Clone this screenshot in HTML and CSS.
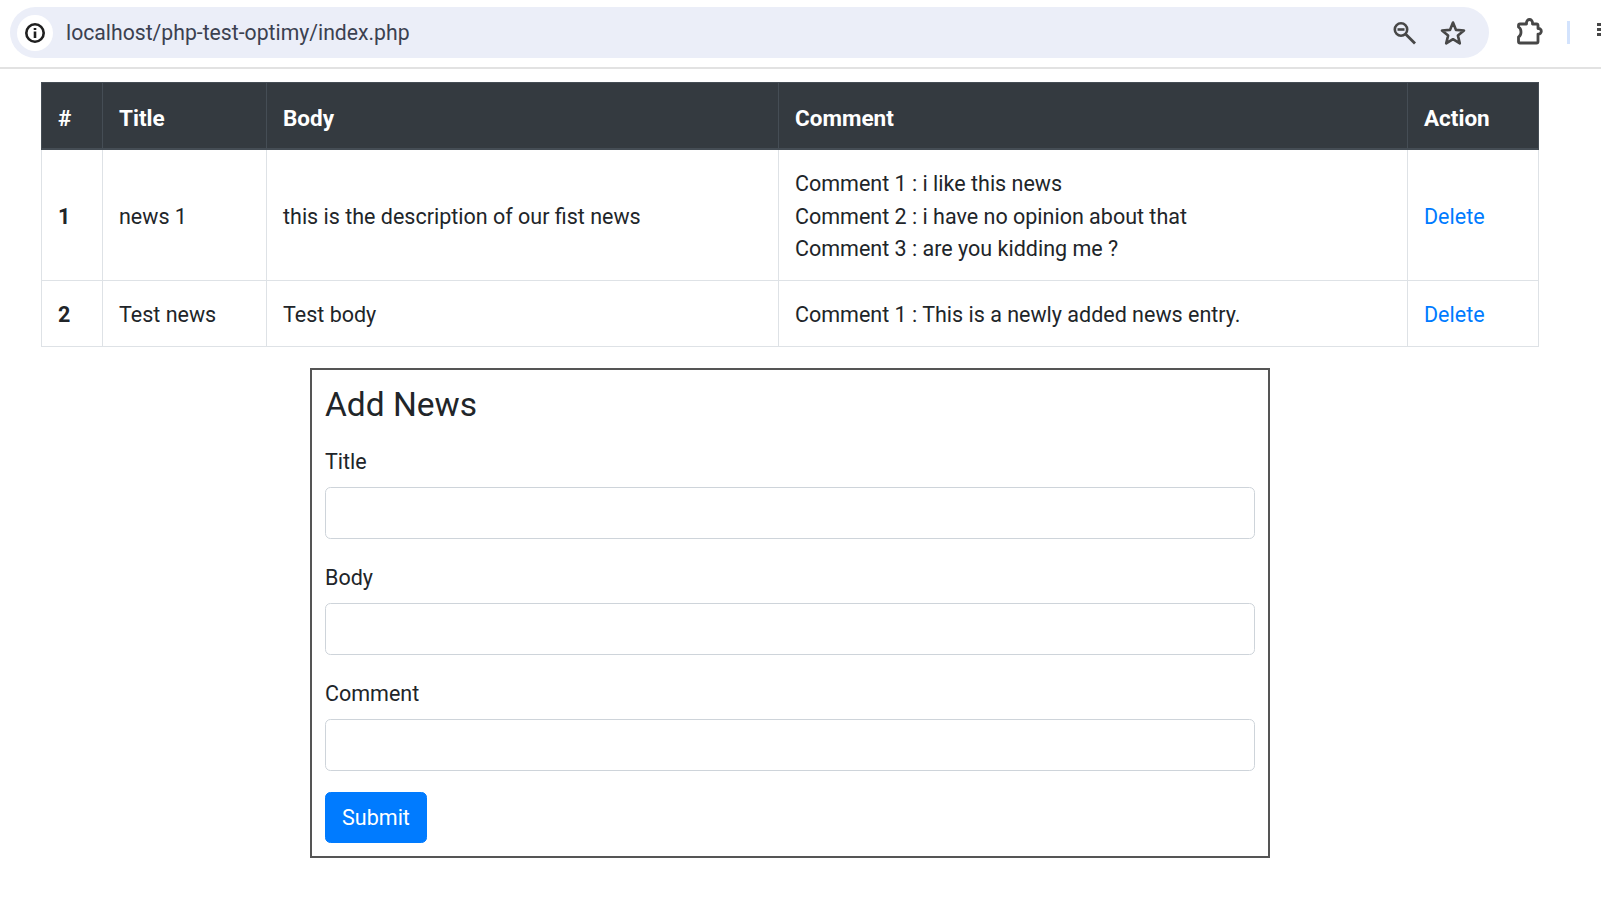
FILE: index.html
```html
<!DOCTYPE html>
<html lang="en">
<head>
<meta charset="utf-8">
<title>News</title>
<link rel="stylesheet" href="styles.css">
</head>
<body>
<header class="chrome">
  <div class="omnibox">
    <span class="site-info">
      <svg width="24" height="24" viewBox="0 0 24 24" fill="none" stroke="#1f1f1f" stroke-width="2.6"><circle cx="12" cy="12" r="8.700"/><path d="M12 10.500v6.500"/><path d="M12 7v2"/></svg>
    </span>
    <span class="url">localhost/php-test-optimy/index.php</span>
    <svg class="zoom-icon" width="28" height="28" viewBox="0 0 28 28" fill="none" stroke="#474747" stroke-width="2.6"><circle cx="10" cy="10.500" r="6.200"/><path d="M6.500 10.500h7"/><path d="M14.500 15l9.500 9.500" stroke-width="2.800"/></svg>
    <svg class="star-icon" width="28" height="28" viewBox="0 0 28 28" fill="none" stroke="#474747" stroke-width="2.6" stroke-linejoin="round"><path d="M14 3.500l3 7.400 8 .6-6.100 5.100 1.900 7.800L14 20.200l-6.800 4.200 1.900-7.800L3 11.500l8-.6z"/></svg>
  </div>
  <svg class="ext-icon" width="28" height="28" viewBox="0 0 28 28" fill="none" stroke="#474747" stroke-width="2.800" stroke-linejoin="round"><path d="M5 7H11.500V5.500a3 3 0 0 1 6 0V7H21.500A1.500 1.500 0 0 1 23 8.500V11.500h.5a2.800 2.800 0 0 1 0 5.600H23v7.400A1.500 1.500 0 0 1 21.500 26H5a1.500 1.500 0 0 1-1.500-1.500V20c2-1 2.500-3 2.500-5s-.5-4-2.500-5V8.500A1.500 1.500 0 0 1 5 7z"/></svg>
  <span class="divider"></span>
  <span class="menu-dots"><i></i><i></i><i></i></span>
</header>
<main>
  <table class="news">
    <colgroup>
      <col class="c-num"><col class="c-title"><col class="c-body"><col class="c-comment"><col class="c-action">
    </colgroup>
    <thead>
      <tr><th>#</th><th>Title</th><th>Body</th><th>Comment</th><th>Action</th></tr>
    </thead>
    <tbody>
      <tr>
        <th>1</th>
        <td>news 1</td>
        <td>this is the description of our fist news</td>
        <td>Comment 1 : i like this news<br>Comment 2 : i have no opinion about that<br>Comment 3 : are you kidding me ?</td>
        <td><a href="#">Delete</a></td>
      </tr>
      <tr class="single">
        <th>2</th>
        <td>Test news</td>
        <td>Test body</td>
        <td>Comment 1 : This is a newly added news entry.</td>
        <td><a href="#">Delete</a></td>
      </tr>
    </tbody>
  </table>
  <form class="add-form">
    <h3>Add News</h3>
    <div class="field"><label for="t">Title</label><input id="t" type="text"></div>
    <div class="field"><label for="b">Body</label><input id="b" type="text"></div>
    <div class="field"><label for="c">Comment</label><input id="c" type="text"></div>
    <button type="button">Submit</button>
  </form>
</main>
</body>
</html>
```
FILE: styles.css
```css
* { box-sizing: border-box; }
html, body { margin: 0; padding: 0; }
body {
  font-family: Roboto, "Noto Sans", sans-serif;
  font-size: 21.5px;
  line-height: 32.64px;
  color: #212529;
  background: #fff;
  overflow: hidden;
}
.chrome {
  height: 69px;
  border-bottom: 2px solid #e2e2e2;
  display: flex;
  align-items: flex-start;
  padding: 7px 0 0 10px;
  overflow: hidden;
}
.omnibox {
  width: 1479px;
  height: 51px;
  flex: none;
  border-radius: 26px;
  background: #ebeef8;
  display: flex;
  align-items: center;
  padding: 0 22px 0 7px;
}
.site-info {
  width: 36px;
  height: 36px;
  border-radius: 50%;
  background: #fff;
  display: flex;
  align-items: center;
  justify-content: center;
  flex: none;
}
.url {
  margin-left: 13px;
  padding-top: 2px;
  font-size: 21.2px;
  color: #3b4150;
  flex: 1;
}
.star-icon { margin-left: 20px; }
.ext-icon { margin: 10px 0 0 26px; flex: none; }
.divider {
  width: 3px;
  height: 23px;
  background: #d3e3fd;
  margin: 14px 0 0 24px;
  flex: none;
}
.menu-dots {
  display: flex;
  flex-direction: column;
  gap: 2px;
  margin: 16px 0 0 27px;
  flex: none;
}
.menu-dots i { display: block; width: 4px; height: 3px; background: #474747; }
main { padding: 13px 62px 0 41px; }
.news {
  width: 1497px;
  table-layout: fixed;
  border-collapse: collapse;
}
.c-num { width: 61px; }
.c-title { width: 164px; }
.c-body { width: 512px; }
.c-comment { width: 629px; }
.c-action { width: 131px; }
.news th, .news td {
  padding: 18.500px 16px 13.500px;
  border: 1px solid #dee2e6;
  text-align: left;
  vertical-align: middle;
  font-weight: 400;
}
.news .single th, .news .single td { padding: 18.300px 16px 14.700px; }
.news tbody th { font-weight: 700; }
.news thead th {
  background: #343a40;
  color: #fff;
  font-size: 22.5px;
  font-weight: 700;
  padding: 18.500px 16px 13.500px;
  border-color: #454d55;
  border-bottom-width: 2px;
}
.news a { color: #007bff; text-decoration: none; }
.add-form {
  width: 960px;
  height: 490px;
  margin: 21px 0 0 269px;
  border: 2px solid #555;
  padding: 12px 13px 0;
}
.add-form h3 {
  margin: 0 0 17.500px;
  font-size: 33.500px;
  line-height: 45px;
  font-weight: 400;
}
.field { margin-bottom: 21.26px; }
.field label { display: block; padding-top: 1.500px; margin-bottom: 8.380px; }
.field input {
  display: block;
  width: 100%;
  height: 52px;
  border: 1px solid #ced4da;
  border-radius: 5.44px;
  background: #fff;
}
.add-form button {
  display: block;
  width: 102px;
  height: 51px;
  padding: 1px 0 0;
  border: 1px solid #007bff;
  border-radius: 5.44px;
  background: #007bff;
  color: #fff;
  font: inherit;
}
```
